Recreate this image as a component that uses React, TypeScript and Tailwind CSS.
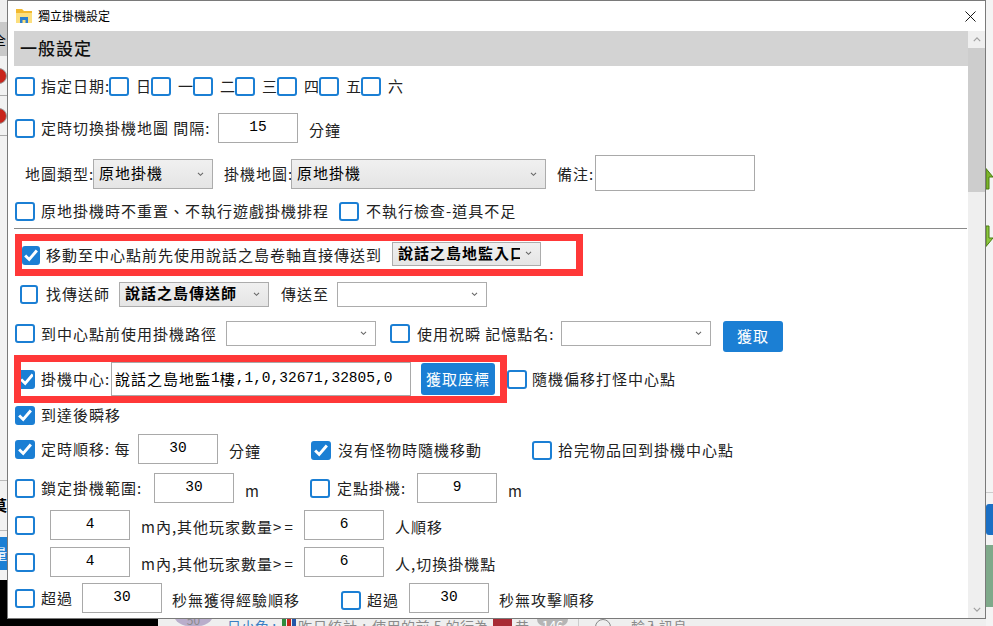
import type { ReactNode } from 'react';

function Box({ checked, w = 'w-[20px]', className = '' }: { checked?: boolean; w?: string; className?: string }) {
  return (
    <span
      className={`flex h-[19px] shrink-0 items-center justify-center overflow-hidden rounded-[3px] border-2 border-[#1b7fd4] ${w} ${
        checked ? 'bg-[#1b7fd4]' : 'bg-white'
      } ${className}`}
    >
      {checked && (
        <svg viewBox="0 0 20 20" className="h-[18px] w-[18px] shrink-0" fill="none" stroke="#fff" strokeWidth="3.2">
          <path d="M3.5 10.5 8 15l8.5-10" />
        </svg>
      )}
    </span>
  );
}

function Txt({ children, className = '' }: { children: ReactNode; className?: string }) {
  return <span className={`shrink-0 whitespace-nowrap text-[15px] leading-[20px] tracking-[1px] text-[#222] ${className}`}>{children}</span>;
}

function Num({ value, className = '' }: { value?: string; className?: string }) {
  return (
    <span
      className={`flex h-[30px] w-[80px] shrink-0 items-center justify-center border border-[#a9a9a9] bg-white font-['Liberation_Mono',monospace] text-[14.5px] text-black ${className}`}
    >
      {value}
    </span>
  );
}

function Sel({ value, w = 'w-[150px]', h = 'h-[25px]', bold, plain }: { value?: string; w?: string; h?: string; bold?: boolean; plain?: boolean }) {
  return (
    <span
      className={`flex shrink-0 items-center overflow-hidden border border-[#acacac] pl-[5px] pr-[8px] ${
        plain ? 'bg-white' : 'bg-gradient-to-b from-[#f0f0f0] to-[#e5e5e5]'
      } ${w} ${h}`}
    >
      <span className={`min-w-0 flex-1 overflow-hidden whitespace-nowrap pb-[2px] text-[15px] leading-[20px] tracking-[1px] text-black ${bold ? 'font-bold' : ''}`}>{value}</span>
      <svg viewBox="0 0 8 6" className="ml-[5px] h-[5px] w-[7px] shrink-0" fill="none" stroke="#666" strokeWidth="1.3">
        <path d="M1 1l3 3 3-3" />
      </svg>
    </span>
  );
}

function Row({ h, children, className = '' }: { h: string; children: ReactNode; className?: string }) {
  return <div className={`flex shrink-0 items-center ${h} ${className}`}>{children}</div>;
}

function RedDot() {
  return <div className="ml-[-9px] h-[16px] w-[16px] rounded-full border border-[#999] bg-[#c8261c]" />;
}

function Backdrop() {
  return (
    <>
      {/* left strip */}
      <div className="absolute left-0 top-0 h-[626px] w-[7px] overflow-hidden bg-[#f2f2f2]">
        <div className="h-[22px] bg-[#efefef]" />
        <div className="flex h-[34px] items-center bg-[#c9c9c9] text-[14px] text-black">
          <span className="ml-[-8px]">全</span>
        </div>
        <div className="mt-[12px]"><RedDot /></div>
        <div className="mt-[11px] h-px bg-[#aaa]" />
        <div className="mt-[12px]"><RedDot /></div>
        <div className="mt-[11px] h-px bg-[#aaa]" />
        <div className="mt-[344px] h-px bg-[#bbb]" />
        <div className="ml-[-8px] mt-[14px] text-[15px] font-bold leading-[20px] text-black">莫</div>
        <div className="mt-[15px] h-px bg-[#bbb]" />
        <div className="mt-[6px] flex h-[33px] items-center bg-[#1b7fd4] text-[14px] text-white">
          <span className="ml-[-7px]">量</span>
        </div>
        <div className="mt-[10px] h-[46px] bg-black" />
      </div>
      {/* bottom strip */}
      <div className="absolute bottom-0 left-[7px] flex h-[7px] w-[979px] items-start overflow-hidden bg-[#efefef] text-[14px] leading-[14px] text-[#8a8a8a]">
        <div className="h-full w-[151px] shrink-0 bg-black" />
        <div className="ml-[14px] mt-[-26px] flex h-[33px] w-[43px] shrink-0 items-end justify-center rounded-full bg-[#b9aecb]">
          <span className="mb-[-1px] text-[12px]">50</span>
        </div>
        <span className="ml-[12px] w-[55px] shrink-0 whitespace-nowrap text-[#3a7fc4]">日小兔 :</span>
        <div className="flex h-full w-[16px] shrink-0">
          <div className="w-[4px] bg-[#2e8b3d]" />
          <div className="ml-[1px] w-[4px] bg-[#c8261c]" />
          <div className="ml-[1px] w-[4px] bg-[#2456a8]" />
        </div>
        <span className="w-[74px] shrink-0 whitespace-nowrap tracking-[1px]">昨日統計 :</span>
        <span className="w-[121px] shrink-0 whitespace-nowrap tracking-[0.5px]">使用的前 5 的行為 :</span>
        <div className="h-full w-[19px] shrink-0 bg-[#a82a34]" />
        <span className="ml-[3px] w-[22px] shrink-0 whitespace-nowrap">昔...</span>
        <div className="flex h-full w-[31px] shrink-0 items-start justify-center rounded-b-full bg-[#b5b5b5] text-[13px] text-white">146</div>
        <div className="ml-[10px] h-full w-px shrink-0 bg-[#ccc]" />
        <div className="ml-[16px] h-[16px] w-[16px] shrink-0 rounded-full border border-[#888]" />
        <span className="ml-[20px] whitespace-nowrap">輸入訊息</span>
      </div>
      {/* right strip */}
      <div className="absolute right-0 top-0 flex h-[626px] w-[7px] flex-col overflow-hidden bg-[#f4f4f4]">
        <svg viewBox="0 0 7 22" className="mt-[168px] h-[22px] w-[7px] shrink-0">
          <path d="M0 .5 7 9H3v12H0z" fill="#7db42c" stroke="#4a7d12" strokeWidth="1" />
        </svg>
        <svg viewBox="0 0 7 22" className="mt-[35px] h-[22px] w-[7px] shrink-0">
          <path d="M0 1h3v12h4l-7 8.5z" fill="#8cc63f" stroke="#4a7d12" strokeWidth="1" />
        </svg>
        <div className="mt-[245px] h-px shrink-0 bg-[#ccc]" />
        <div className="mt-[11px] h-[31px] shrink-0 rounded-l-[3px] bg-[#1b6fc4]" />
        <div className="mt-[10px] h-[62px] shrink-0 bg-[#7fa98a]" />
      </div>
    </>
  );
}

export default function App() {
  return (
    <div className="relative h-[626px] w-[993px] overflow-hidden bg-white font-['Noto_Sans_CJK_TC','Liberation_Sans',sans-serif]">
      <Backdrop />
      {/* settings window */}
      <div className="absolute left-[7px] top-0 flex h-[619px] w-[979px] flex-col border border-[#7a7a7a] bg-white">
        <div className="flex h-[30px] shrink-0 items-center pl-[8px] pr-[9px]">
          <svg viewBox="0 0 16 16" className="h-[16px] w-[16px]">
            <path d="M0 1h6l2 2h8v12H0z" fill="#f2b92f" />
            <path d="M0 5h16v10H0z" fill="#fcdf7e" />
            <path d="M4 9h8v6H9.5v-3h-3v3H4z" fill="#2a7fd0" />
          </svg>
          <span className="ml-[6px] text-[12px] text-black">獨立掛機設定</span>
          <svg viewBox="0 0 12 12" className="ml-auto h-[11px] w-[11px]" fill="none" stroke="#000" strokeWidth="1">
            <path d="M.5.5l11 11M11.5.5l-11 11" />
          </svg>
        </div>
        <div className="flex min-h-0 flex-1">
          <div className="min-w-0 flex-1 overflow-hidden pl-[6px]">
            <div className="flex h-[35px] items-center bg-[#d3d3d3] pb-[2px] pl-[6px] text-[17px] font-medium leading-[22px] tracking-[1px] text-[#111]">一般設定</div>

            <Row h="h-[39px]" className="pl-px pt-[1px]">
              <Box />
              <Txt className="ml-[6px] w-[68px]">指定日期:</Txt>
              <Box />
              <Txt className="ml-[7px] w-[15px]">日</Txt>
              <Box />
              <Txt className="ml-[7px] w-[15px]">一</Txt>
              <Box />
              <Txt className="ml-[7px] w-[15px]">二</Txt>
              <Box />
              <Txt className="ml-[7px] w-[15px]">三</Txt>
              <Box />
              <Txt className="ml-[7px] w-[15px]">四</Txt>
              <Box />
              <Txt className="ml-[7px] w-[15px]">五</Txt>
              <Box />
              <Txt className="ml-[7px] w-[15px]">六</Txt>
            </Row>

            <Row h="h-[46px]" className="pl-px">
              <Box />
              <Txt className="ml-[6px] w-[177px]">定時切換掛機地圖 間隔:</Txt>
              <Num value="15" />
              <Txt className="ml-[11px] mt-[3px]">分鐘</Txt>
            </Row>

            <Row h="h-[46px]" className="pl-[11px]">
              <Txt className="w-[68px]">地圖類型:</Txt>
              <Sel value="原地掛機" w="w-[120px]" h="h-[30px]" />
              <Txt className="ml-[11px] w-[67px]">掛機地圖:</Txt>
              <Sel value="原地掛機" w="w-[255px]" h="h-[30px]" />
              <Txt className="ml-[11px] w-[38px]">備注:</Txt>
              <span className="mt-[-2px] h-[36px] w-[160px] shrink-0 border border-[#a9a9a9]" />
            </Row>

            <Row h="h-[31px]" className="pb-[3px] pl-px">
              <Box />
              <Txt className="ml-[6px] w-[298px]">原地掛機時不重置、不執行遊戲掛機排程</Txt>
              <Box />
              <Txt className="ml-[7px]">不執行檢查-道具不足</Txt>
            </Row>

            <div className="mr-px h-[1px] bg-[#8a8a8a]" />

            <div className="ml-px mt-[5px] flex h-[42px] w-[568px] items-center border-[7px] border-[#ff3838]">
              <Box checked w="w-[18px]" />
              <Txt className="ml-[6px] w-[346px]">移動至中心點前先使用說話之島卷軸直接傳送到</Txt>
              <div className="mt-[-3px]">
                <Sel value="說話之島地監入口" w="w-[149px]" h="h-[24px]" bold />
              </div>
            </div>

            <Row h="h-[36px]" className="pl-[6px]">
              <Box w="w-[18px]" />
              <Txt className="ml-[8px] w-[73px]">找傳送師</Txt>
              <Sel value="說話之島傳送師" bold />
              <Txt className="ml-[12px] w-[56px]">傳送至</Txt>
              <Sel plain />
            </Row>

            <Row h="h-[43px]" className="pl-px">
              <Box />
              <Txt className="ml-[6px] w-[185px]">到中心點前使用掛機路徑</Txt>
              <Sel plain />
              <Box className="ml-[14px]" />
              <Txt className="ml-[7px] w-[144px]">使用祝瞬 記憶點名:</Txt>
              <Sel plain />
              <span className="ml-[12px] mt-[5px] flex h-[31px] w-[60px] shrink-0 items-center justify-center rounded-[3px] bg-[#1b7fd4] text-[15px] tracking-[1px] text-white">獲取</span>
            </Row>

            <div className="flex h-[48px] items-center">
              <div className="flex h-[48px] w-[493px] shrink-0 items-center border-[7px] border-[#ff3838]">
                <Box checked w="w-[14px]" className="rounded-l-none border-l-0" />
                <Txt className="ml-[6px] w-[70px]">掛機中心:</Txt>
                <span className="flex h-[34px] w-[300px] shrink-0 items-center overflow-hidden whitespace-nowrap border border-[#a9a9a9] pl-[3px] font-['Liberation_Mono','Noto_Sans_CJK_TC',monospace] text-[14.5px] text-black">
                  <span className="font-['Noto_Sans_CJK_TC',sans-serif] text-[15px] tracking-[1px]">說話之島地監</span>1<span className="font-['Noto_Sans_CJK_TC',sans-serif] text-[15px] tracking-[1px]">樓</span>,1,0,32671,32805,0
                </span>
                <span className="ml-[10px] flex h-[32px] w-[74px] shrink-0 items-center justify-center rounded-[3px] bg-[#1b7fd4] text-[15px] tracking-[1px] text-white">獲取座標</span>
              </div>
              <Box />
              <Txt className="ml-[5px]">隨機偏移打怪中心點</Txt>
            </div>

            <Row h="h-[24px]" className="pl-px">
              <Box checked />
              <Txt className="ml-[6px]">到達後瞬移</Txt>
            </Row>

            <Row h="h-[44px]" className="pl-px">
              <Box checked />
              <Txt className="ml-[6px] w-[97px]">定時順移: 每</Txt>
              <Num value="30" />
              <Txt className="ml-[11px] mt-[3px] w-[82px]">分鐘</Txt>
              <Box checked className="mt-[2px]" />
              <Txt className="ml-[7px] mt-[2px] w-[194px]">沒有怪物時隨機移動</Txt>
              <Box className="mt-[2px]" />
              <Txt className="ml-[6px] mt-[2px]">拾完物品回到掛機中心點</Txt>
            </Row>

            <Row h="h-[34px]" className="pl-px">
              <Box />
              <Txt className="ml-[6px] w-[113px]">鎖定掛機範圍:</Txt>
              <Num value="30" />
              <Txt className="ml-[11px] mt-[5px] w-[65px]">m</Txt>
              <Box />
              <Txt className="ml-[7px] w-[80px]">定點掛機:</Txt>
              <Num value="9" />
              <Txt className="ml-[11px] mt-[5px]">m</Txt>
            </Row>

            <Row h="h-[40px]" className="pl-px">
              <Box />
              <Num value="4" className="ml-[15px]" />
              <Txt className="ml-[11px] mt-[3px] w-[163px]">m內,其他玩家數量<span className="tracking-[3px]">&gt;=</span></Txt>
              <Num value="6" />
              <Txt className="ml-[11px] mt-[3px]">人順移</Txt>
            </Row>

            <Row h="h-[34px]" className="pl-px">
              <Box />
              <Num value="4" className="ml-[15px]" />
              <Txt className="ml-[11px] mt-[3px] w-[163px]">m內,其他玩家數量<span className="tracking-[3px]">&gt;=</span></Txt>
              <Num value="6" />
              <Txt className="ml-[11px] mt-[3px]">人,切換掛機點</Txt>
            </Row>

            <Row h="h-[38px]" className="pl-px">
              <Box />
              <Txt className="ml-[6px] w-[41px]">超過</Txt>
              <Num value="30" />
              <Txt className="ml-[10px] mt-[3px] w-[169px]">秒無獲得經驗順移</Txt>
              <Box className="mt-[4px]" />
              <Txt className="ml-[6px] mt-[3px] w-[42px]">超過</Txt>
              <Num value="30" />
              <Txt className="ml-[10px] mt-[3px]">秒無攻擊順移</Txt>
            </Row>
          </div>

          {/* scrollbar */}
          <div className="flex w-[17px] shrink-0 flex-col bg-[#efefef]">
            <div className="flex h-[17px] items-center justify-center">
              <svg viewBox="0 0 10 6" className="h-[5px] w-[8px]" fill="none" stroke="#a0a0a0" strokeWidth="1.5">
                <path d="M1 5l4-4 4 4" />
              </svg>
            </div>
            <div className="h-[144px] bg-[#cdcdcd]" />
            <div className="mt-auto flex h-[17px] items-center justify-center">
              <svg viewBox="0 0 10 6" className="h-[5px] w-[8px]" fill="none" stroke="#a0a0a0" strokeWidth="1.5">
                <path d="M1 1l4 4 4-4" />
              </svg>
            </div>
          </div>
        </div>
      </div>
    </div>
  );
}
